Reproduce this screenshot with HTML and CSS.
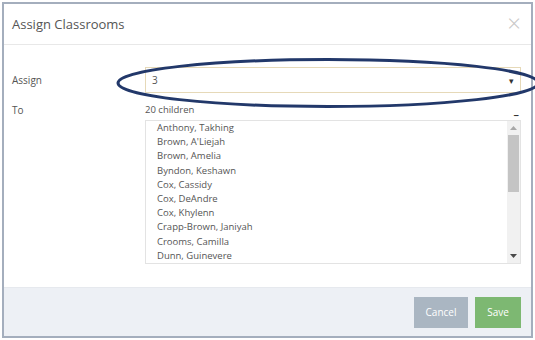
FILE: index.html
```html
<!DOCTYPE html>
<html lang="en">
<head>
    <meta charset="UTF-8">
    <title>Assign Classrooms</title>
    <link rel="stylesheet" href="styles.css">
</head>
<body>
    <div class="modal">
        <div class="modal-header">
            <span class="modal-title">Assign Classrooms</span>
            <span class="close">&times;</span>
        </div>

        <div class="modal-body">
            <div class="row row-assign">
                <label class="label">Assign</label>
                <div class="select">
                    <span>3</span>
                    <span class="caret">&#9662;</span>
                </div>
            </div>

            <div class="row row-to">
                <label class="label">To</label>
                <div class="field">
                    <div class="count-line">
                        <span>20 children</span>
                        <span class="collapse">&minus;</span>
                    </div>
                    <div class="list">
                        <div class="items">
                            <div class="item">Anthony, Takhing</div>
                            <div class="item">Brown, A'Liejah</div>
                            <div class="item">Brown, Amelia</div>
                            <div class="item">Byndon, Keshawn</div>
                            <div class="item">Cox, Cassidy</div>
                            <div class="item">Cox, DeAndre</div>
                            <div class="item">Cox, Khylenn</div>
                            <div class="item">Crapp-Brown, Janiyah</div>
                            <div class="item">Crooms, Camilla</div>
                            <div class="item">Dunn, Guinevere</div>
                            <div class="item">Ellis, Marcus</div>
                            <div class="item">Foster, Brianna</div>
                            <div class="item">Green, Jalen</div>
                            <div class="item">Harris, Naomi</div>
                            <div class="item">Jackson, Tyree</div>
                            <div class="item">Johnson, Kayla</div>
                            <div class="item">Lewis, Amari</div>
                            <div class="item">Moore, Jada</div>
                            <div class="item">Robinson, Zion</div>
                            <div class="item">Walker, Aaliyah</div>
                        </div>
                        <div class="scrollbar">
                            <svg class="arrow" width="7" height="4" viewBox="0 0 7 4"><polygon points="0,4 7,4 3.5,0" fill="#a8a8a8"/></svg>
                            <div class="track"><div class="thumb"></div></div>
                            <svg class="arrow" width="7" height="4" viewBox="0 0 7 4"><polygon points="0,0 7,0 3.5,4" fill="#4a4a4a"/></svg>
                        </div>
                    </div>
                </div>
            </div>
        </div>

        <div class="modal-footer">
            <button class="btn btn-cancel">Cancel</button>
            <button class="btn btn-save">Save</button>
        </div>

        <!-- annotation drawn over the select -->
        <svg class="highlight" width="430" height="56" viewBox="0 0 430 56">
            <ellipse cx="213" cy="26" rx="210" ry="23.5" fill="none" stroke="#22386a" stroke-width="3"/>
        </svg>
    </div>
</body>
</html>
```

FILE: styles.css
```css
body {
    margin: 0;
    background: #fff;
    font-family: "Open Sans", Arial, sans-serif;
    color: #555;
    overflow: hidden;
}

.modal {
    position: relative;
    margin: 2px;
    width: 527px;
    height: 332px;
    border: 2px solid #a4aebd;
    background: #fff;
    display: flex;
    flex-direction: column;
}

.modal-header {
    height: 40px;
    padding: 0 10px 0 8px;
    display: flex;
    align-items: center;
    justify-content: space-between;
    border-bottom: 1px solid #e8e8e8;
}

.modal-title {
    font-size: 13px;
    color: #555;
}

.close {
    font-size: 24px;
    line-height: 24px;
    color: #c8c8c8;
    font-weight: 300;
    margin-top: -2px;
}

.modal-body {
    flex: 1;
    padding: 22px 10px 0 8px;
}

.row {
    display: flex;
}

.label {
    width: 133px;
    font-size: 10px;
    color: #555;
}

.row-assign {
    align-items: center;
    height: 26px;
}

.select {
    flex: 1;
    height: 24px;
    border: 1px solid #e6d9b8;
    display: flex;
    align-items: center;
    justify-content: space-between;
    padding: 0 6px;
    font-size: 10px;
    color: #555;
}

.caret {
    font-size: 9px;
    color: #333;
}

.row-to {
    margin-top: 11px;
}

.field {
    flex: 1;
}

.count-line {
    display: flex;
    justify-content: space-between;
    font-size: 9.5px;
    height: 12px;
}

.collapse {
    font-weight: bold;
    color: #333;
    padding-right: 2px;
    margin-top: 6px;
}

.label,
.count-line {
    line-height: 12px;
}

.list {
    margin-top: 4px;
    height: 142px;
    border: 1px solid #e3e3e3;
    display: flex;
}

.items {
    flex: 1;
    overflow: hidden;
    padding-left: 11px;
}

.item {
    font-size: 9.5px;
    line-height: 14.2px;
    color: #555;
}

.scrollbar {
    width: 13px;
    background: #f1f1f1;
    display: flex;
    flex-direction: column;
    align-items: center;
}

.arrow {
    margin: 5px 0;
}

.track {
    flex: 1;
    width: 100%;
}

.thumb {
    margin: 0 1px;
    height: 57px;
    background: #c4c4c4;
}

.modal-footer {
    height: 48px;
    background: #edf0f5;
    border-top: 1px solid #e6e9ee;
    display: flex;
    align-items: center;
    justify-content: flex-end;
    gap: 7px;
    padding: 0 10px;
}

.btn {
    height: 31px;
    border: none;
    color: #fff;
    font-family: "Open Sans", Arial, sans-serif;
    font-size: 10px;
    padding: 0;
}

.btn-cancel {
    width: 54px;
    background: #aab6c2;
}

.btn-save {
    width: 46px;
    background: #7db872;
}

.highlight {
    position: absolute;
    left: 111px;
    top: 53px;
}
```
